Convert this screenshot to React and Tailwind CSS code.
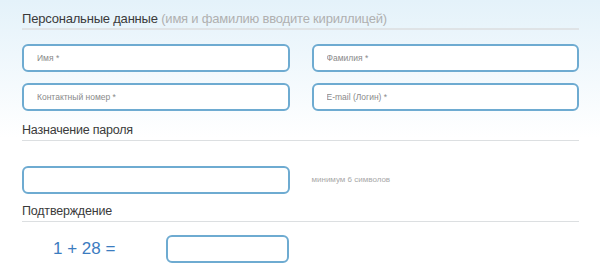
function Field({ placeholder, className = "" }) {
  return (
    <input
      type="text"
      placeholder={placeholder}
      className={`h-[28px] rounded-[6px] border-2 border-[#6eabd1] bg-white px-[13px] text-[8.5px] text-[#555] placeholder:text-[#8a8a8a] outline-none ${className}`}
    />
  );
}

function Heading({ children }) {
  return (
    <div className="border-b border-[#dcdfe1] pb-[2px] text-[12.5px] leading-[16px] tracking-[-0.2px] text-[#3a3a3a]">
      {children}
    </div>
  );
}

export default function App() {
  return (
    <div
      className="h-[276px] w-[600px] bg-gradient-to-b from-[#e4f2fa] via-white to-white px-[22px]"
      style={{ fontFamily: '"Liberation Sans", Arial, sans-serif' }}
    >
      <div className="w-[557px] pt-[11px]">
        <div className="border-b-2 border-[#dfe3e6] pb-[1px] text-[13px] leading-[16px] tracking-[-0.2px] text-[#3a3a3a]">
          Персональные данные{" "}
          <span className="text-[#b0b0b0]">(имя и фамилию вводите кириллицей)</span>
        </div>

        <div className="mt-[14px] grid grid-cols-2 gap-x-[22px] gap-y-[11px]">
          <Field placeholder="Имя *" />
          <Field placeholder="Фамилия *" />
          <Field placeholder="Контактный номер *" />
          <Field placeholder="E-mail (Логин) *" />
        </div>

        <div className="mt-[11px]">
          <Heading>Назначение пароля</Heading>
        </div>

        <div className="mt-[25px] grid grid-cols-2 items-center gap-x-[22px]">
          <Field className="h-[27px]" />
          <span className="text-[8px] text-[#a8a8a8]">минимум 6 символов</span>
        </div>

        <div className="mt-[9px]">
          <Heading>Подтверждение</Heading>
        </div>

        <div className="mt-[13px] flex items-center">
          <span className="w-[144px] pl-[31px] text-[17px] leading-[20px] text-[#3b7cbf]">1 + 28 =</span>
          <Field className="h-[27px] w-[123px]" />
        </div>
      </div>
    </div>
  );
}
